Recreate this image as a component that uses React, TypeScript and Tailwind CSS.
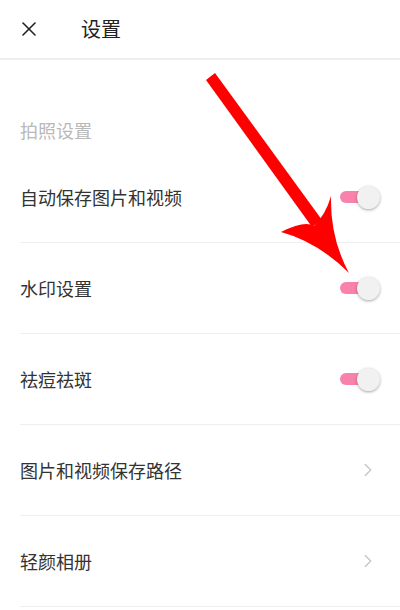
import { X, ChevronRight } from "lucide-react";

type Row = {
  label: string;
  kind: "toggle" | "link";
};

const rows: Row[] = [
  { label: "自动保存图片和视频", kind: "toggle" },
  { label: "水印设置", kind: "toggle" },
  { label: "祛痘祛斑", kind: "toggle" },
  { label: "图片和视频保存路径", kind: "link" },
  { label: "轻颜相册", kind: "link" },
];

function Toggle() {
  return (
    <div className="relative w-[40px] h-[24px] flex items-center">
      <div className="absolute left-0 w-[32px] h-[12px] rounded-full bg-[#f982ad]" />
      <div className="absolute right-0 w-[23px] h-[23px] rounded-full bg-[#f1f1f1] shadow-[0_1px_3px_rgba(0,0,0,0.35)]" />
    </div>
  );
}

export default function App() {
  return (
    <div
      className="relative w-[400px] h-[610px] bg-white overflow-hidden text-[#333]"
      style={{ fontFamily: '"Noto Sans CJK SC", "Noto Sans", sans-serif' }}
    >
      {/* Header */}
      <div className="h-[60px] flex items-center border-b-2 border-[#efefef]">
        <X className="ml-[17px] w-[24px] h-[24px] text-[#222]" strokeWidth={1.6} />
        <span className="ml-[40px] text-[20px] text-[#222]">设置</span>
      </div>

      {/* Section title */}
      <div className="h-[92px] flex items-end pb-[11px] pl-5 text-[18px] leading-[22px] text-[#b9b9b9]">
        拍照设置
      </div>

      {/* Rows */}
      {rows.map((row) => (
        <div
          key={row.label}
          className="ml-5 h-[91px] flex items-center justify-between border-b border-[#eeeeee] pr-[20px]"
        >
          <span className="text-[18px] leading-[24px] text-[#333]">{row.label}</span>
          {row.kind === "toggle" ? (
            <Toggle />
          ) : (
            <ChevronRight className="mr-[1px] w-[22px] h-[22px] text-[#c4c4c4]" strokeWidth={1.4} />
          )}
        </div>
      ))}

      {/* Red arrow annotation */}
      <svg
        className="absolute left-0 top-0 pointer-events-none"
        width="400"
        height="610"
        viewBox="0 0 400 610"
      >
        <polygon points="206,80 215,73 322,220 312,227" fill="#ff0000" />
        <path
          d="M281,232 Q305,220 314,226 Q326,214 331,196 Q330,238 349,273 Q318,242 281,232 Z"
          fill="#ff0000"
        />
      </svg>
    </div>
  );
}
